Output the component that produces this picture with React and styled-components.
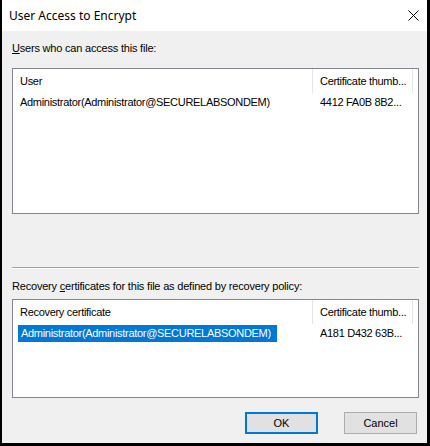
import React from "react";
import styled, { createGlobalStyle } from "styled-components";

const Global = createGlobalStyle`
  html, body { margin: 0; padding: 0; background: #000; }
  body { font-family: "Liberation Sans", Arial, sans-serif; }
`;

const Window = styled.div`
  width: 425px;
  height: 443px;
  margin-left: 2px;
  background: #f0f0f0;
  display: flex;
  flex-direction: column;
  font-family: "Liberation Sans", Arial, sans-serif;
  font-size: 11px;
  color: #000;
`;

const TitleBar = styled.div`
  height: 31px;
  flex: none;
  background: #fff;
  display: flex;
  align-items: center;
  justify-content: space-between;
  padding: 0 8px 0 7px;
  font-family: "Noto Sans", "Liberation Sans", sans-serif;
  font-size: 12px;
  box-sizing: border-box;
`;

const Title = styled.span`
  line-height: 16px;
`;

const Body = styled.div`
  flex: 1;
  display: flex;
  flex-direction: column;
  padding: 11px 8px 0 10px;
`;

const Label = styled.div`
  line-height: 13px;
  letter-spacing: -0.2px;
  margin-top: ${(p) => p.$mt || 0}px;
  white-space: nowrap;
`;

const ListBox = styled.div`
  margin-top: ${(p) => p.$mt || 0}px;
  height: ${(p) => p.$h}px;
  box-sizing: border-box;
  border: 1px solid #828790;
  background: #fff;
  display: flex;
  flex-direction: column;
  letter-spacing: -0.3px;
`;

const Row = styled.div`
  display: grid;
  grid-template-columns: 300px 100px 1fr;
  height: ${(p) => (p.$header ? 24 : 17)}px;
  margin-top: ${(p) => (p.$header ? 0 : 1)}px;
  align-items: center;
`;

const HeadCell = styled.div`
  height: 100%;
  display: flex;
  align-items: center;
  padding-left: 7px;
  border-right: ${(p) => (p.$last ? "none" : "1px solid #e5e5e5")};
  white-space: nowrap;
  overflow: hidden;
`;

const Cell = styled.div`
  padding-left: ${(p) => p.$pl ?? 7}px;
  white-space: nowrap;
  line-height: 17px;
  overflow: hidden;
`;

const Selected = styled.span`
  display: inline-block;
  background: #0078d7;
  color: #fff;
  padding: 0 6px 0 3px;
  line-height: 17px;
`;

const Groove = styled.div`
  margin-top: ${(p) => p.$mt}px;
  border-top: 1px solid #a0a0a0;
  border-bottom: 1px solid #fff;
`;

const ButtonBar = styled.div`
  display: flex;
  justify-content: flex-end;
  gap: 26px;
  margin-top: 14px;
  padding-right: 2px;
`;

const Button = styled.button`
  width: 73px;
  height: 22px;
  box-sizing: border-box;
  background: #e1e1e1;
  border: ${(p) => (p.$default ? "2px solid #0078d7" : "1px solid #adadad")};
  font-family: "Liberation Sans", Arial, sans-serif;
  font-size: 11px;
  color: #000;
  padding: 0;
  margin: 0;
`;

const CloseIcon = () => (
  <svg width="11" height="11" viewBox="0 0 11 11">
    <path d="M0.5 0.5 L10.5 10.5 M10.5 0.5 L0.5 10.5" stroke="#000" strokeWidth="1" fill="none" />
  </svg>
);

export default function App() {
  return (
    <>
      <Global />
      <Window>
        <TitleBar>
          <Title>User Access to Encrypt</Title>
          <CloseIcon />
        </TitleBar>
        <Body>
          <Label>
            <u>U</u>sers who can access this file:
          </Label>
          <ListBox $mt={13} $h={146}>
            <Row $header>
              <HeadCell>User</HeadCell>
              <HeadCell>Certificate thumb...</HeadCell>
              <HeadCell $last />
            </Row>
            <Row>
              <Cell>Administrator(Administrator@SECURELABSONDEM)</Cell>
              <Cell>4412 FA0B 8B2...</Cell>
              <Cell />
            </Row>
          </ListBox>
          <Groove $mt={53} />
          <Label $mt={11}>
            Recovery <u>c</u>ertificates for this file as defined by recovery policy:
          </Label>
          <ListBox $mt={6} $h={99}>
            <Row $header>
              <HeadCell>Recovery certificate</HeadCell>
              <HeadCell>Certificate thumb...</HeadCell>
              <HeadCell $last />
            </Row>
            <Row>
              <Cell $pl={5}>
                <Selected>Administrator(Administrator@SECURELABSONDEM)</Selected>
              </Cell>
              <Cell>A181 D432 63B...</Cell>
              <Cell />
            </Row>
          </ListBox>
          <ButtonBar>
            <Button $default>OK</Button>
            <Button>Cancel</Button>
          </ButtonBar>
        </Body>
      </Window>
    </>
  );
}
